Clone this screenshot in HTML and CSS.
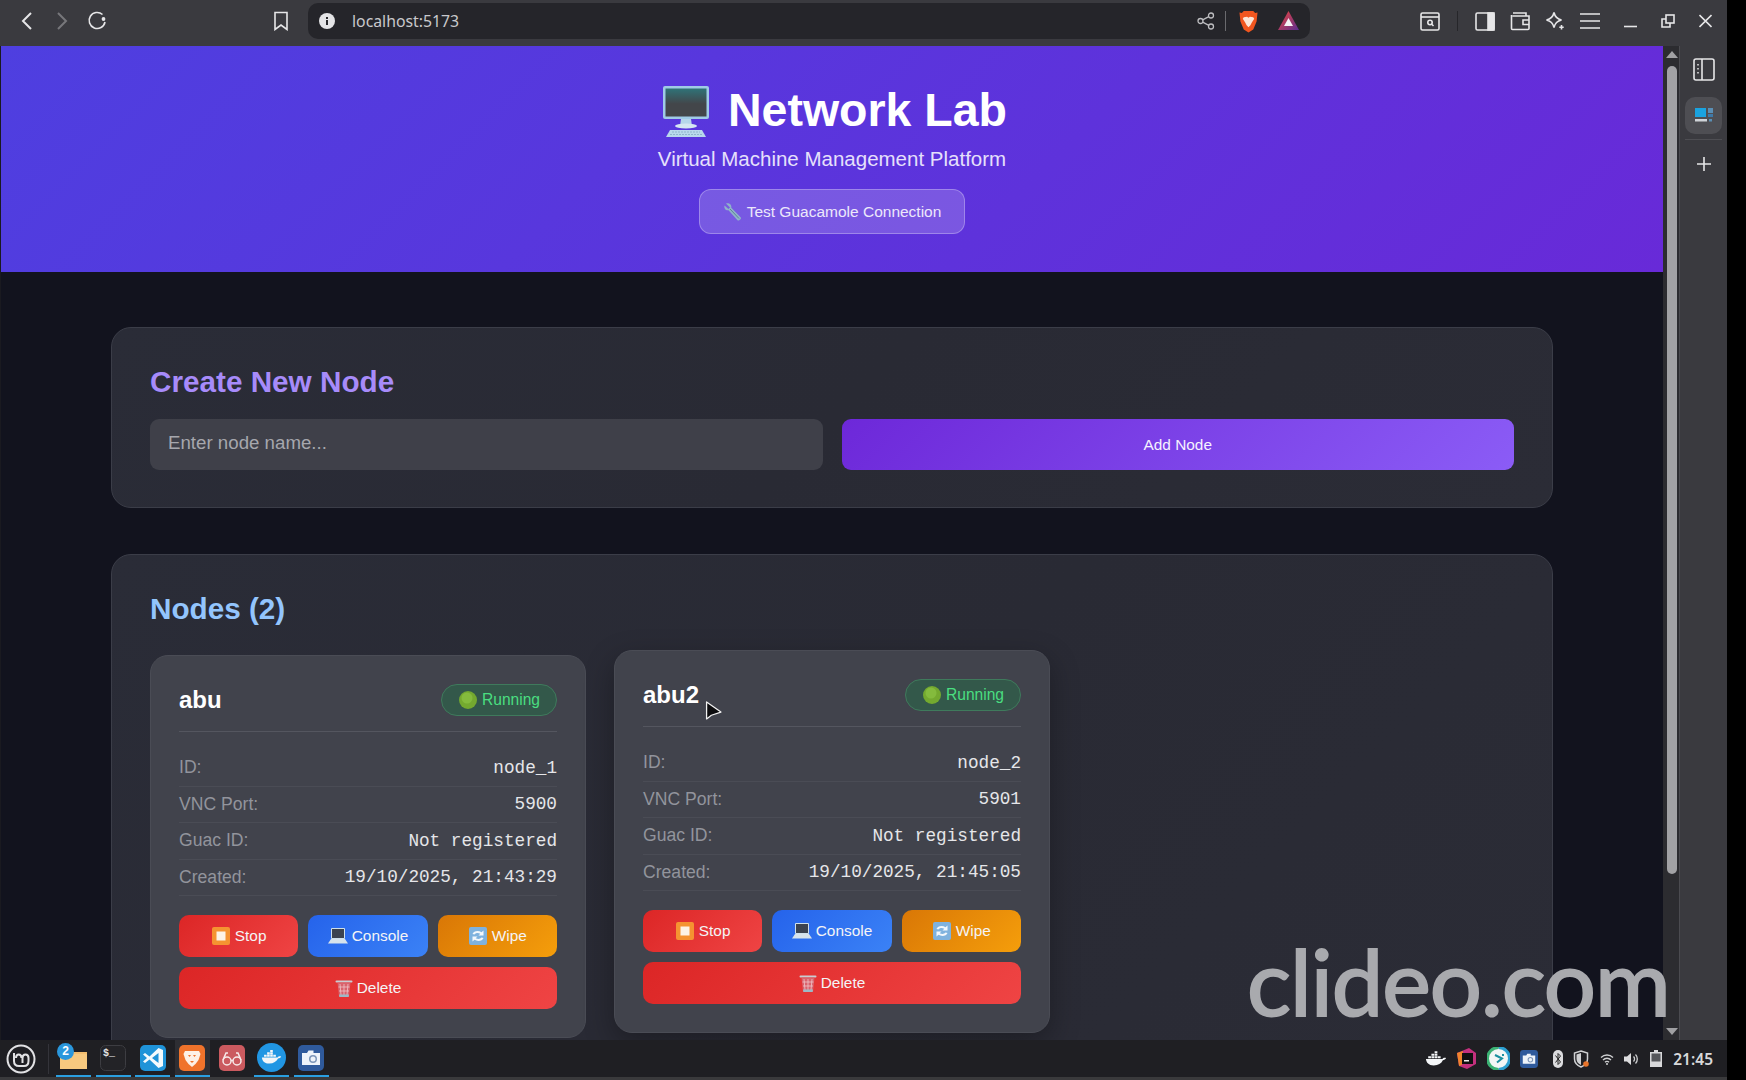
FILE: index.html
```html
<!DOCTYPE html>
<html lang="en">
<head>
    <meta charset="UTF-8">
    <meta name="viewport" content="width=device-width, initial-scale=1.0">
    <title>Network Lab</title>
    <link rel="stylesheet" href="styles.css">
</head>
<body>
    <!-- shared emoji-like icons -->
    <svg class="defs" width="0" height="0">
        <defs>
            <linearGradient id="monitorGlass" x1="0" y1="0" x2="0" y2="1">
                <stop offset="0" stop-color="#2f7378"/>
                <stop offset="0.55" stop-color="#43464a"/>
            </linearGradient>
            <linearGradient id="batGrad" x1="0" y1="0" x2="1" y2="1">
                <stop offset="0" stop-color="#f0463c"/>
                <stop offset="1" stop-color="#5b2d90"/>
            </linearGradient>
            <symbol id="i-monitor" viewBox="0 0 48 52">
                <rect x="1" y="1" width="46" height="33" rx="2" fill="#9fcbe6"/>
                <rect x="3.500" y="3.500" width="41" height="28" fill="url(#monitorGlass)"/>
                <path d="M19 34h10l1 7H18z" fill="#b5d6ea"/>
                <ellipse cx="24" cy="41" rx="11" ry="2.400" fill="#d4e6f2"/>
                <path d="M8 45h32l4 7H4z" fill="#b8d8ec"/>
                <path d="M10 47h28M8 49.500h32" stroke="#8fb4cc" stroke-width="1" stroke-dasharray="2 1"/>
            </symbol>
            <symbol id="i-wrench" viewBox="0 0 20 20">
                <path d="M3 1.500 7 5.500 5.500 7 1.500 3.500C.800 6 2.400 8.700 5.500 8.300L14.500 18.200C15.600 19.300 18.700 17 17.800 15.500L8.300 5.700C8.900 3 6.200.500 3 1.500Z" fill="#8fb3c9"/>
                <path d="M7 7 16 16.500" stroke="#5f8198" stroke-width="1"/>
            </symbol>
            <symbol id="i-dot" viewBox="0 0 20 20">
                <circle cx="10" cy="10" r="9" fill="#74a92f"/>
                <circle cx="9" cy="8" r="5.500" fill="#84bb3d"/>
            </symbol>
            <symbol id="i-stop" viewBox="0 0 20 20">
                <rect x="1" y="1" width="18" height="18" rx="2" fill="#f59331"/>
                <rect x="5.500" y="5.500" width="9" height="9" fill="#fdf3e6"/>
            </symbol>
            <symbol id="i-laptop" viewBox="0 0 20 18">
                <rect x="3" y="1" width="14" height="11" rx="1" fill="#cfe0ea"/>
                <rect x="4" y="2" width="12" height="9" fill="#3b4350"/>
                <path d="M3 12h14l3 4.500H0z" fill="#d6e3ec"/>
            </symbol>
            <symbol id="i-wipe" viewBox="0 0 20 20">
                <rect x="1" y="1" width="18" height="18" rx="2" fill="#7fb2de"/>
                <path d="M4.500 8C5.500 5.200 10 4 13.500 6.200L15.500 4.500V9.500H10.500L12.300 7.800C10 6.500 7.500 7 6.500 8.500Z" fill="#f3f7fb"/>
                <path d="M15.500 12C14.500 14.800 10 16 6.500 13.800L4.500 15.500V10.500H9.500L7.700 12.200C10 13.500 12.500 13 13.500 11.500Z" fill="#f3f7fb"/>
            </symbol>
            <symbol id="i-trash" viewBox="0 0 18 20">
                <path d="M1.500 3.500h15" stroke="#c8cdd2" stroke-width="2" stroke-linecap="round"/>
                <path d="M2.500 4.500h13l-1.500 14H4z" fill="#d9626c"/>
                <path d="M5 6l1 11M9 6v11M13 6l-1 11M3.500 9h11M4 13h10" stroke="#efc4c8" stroke-width=".8"/>
                <path d="M4 16.500h10l-.3 2.500H4.300z" fill="#9db9c6"/>
            </symbol>
            <symbol id="i-brave" viewBox="0 0 20 24">
                <path d="M5 1h10l2 2 2.500-.500L18.500 12 15 20.500 10 23.500 5 20.500 1.500 12 .500 2.500 3 3Z" fill="#f1561f"/>
                <path d="M5 7.500 8.500 7 10 8l1.500-1 3.500.500 1 1.500-2.500 4-1.500 3-2 2-2-2-1.500-3L4 9Z" fill="#fbe6d8"/>
            </symbol>
            <symbol id="i-docker" viewBox="0 0 24 16">
                <path d="M1 8.500h18c.800-1.500 2.500-1.800 4-1-.800 1.600-2 2.200-3.500 2.300C17.800 13.200 14.500 15.500 9.500 15.500 4 15.500 1.500 12.500 1 8.500Z" fill="#f4f6f8"/>
                <path d="M3.500 5.500h3v2.300h-3zM7 5.500h3v2.300H7zM10.500 5.500h3v2.300h-3zM14 5.500h3v2.300h-3zM7 2.700h3V5H7zM10.500 2.700h3V5h-3zM10.500 0h3v2.200h-3z" fill="#f4f6f8"/>
            </symbol>
            <symbol id="i-camera" viewBox="0 0 26 26">
                <rect width="26" height="26" rx="5" fill="#2f5a9c"/>
                <path d="M4 8h5l1.500-2.500h5V8h6.500v12H4z" fill="#eef3fa"/>
                <circle cx="15" cy="14" r="4" fill="#7c95b8"/>
                <circle cx="15" cy="14" r="2.500" fill="#eef3fa"/>
            </symbol>
        </defs>
    </svg>

    <div class="desktop">
        <header class="browser-bar">
            <div class="nav-group">
                <svg class="tool chevron" width="12" height="20" viewBox="0 0 12 20"><path d="M10 2 2 10l8 8"/></svg>
                <svg class="tool chevron dim" width="12" height="20" viewBox="0 0 12 20"><path d="M2 2l8 8-8 8"/></svg>
                <svg class="tool reload" width="20" height="20" viewBox="0 0 20 20"><path d="M15.500 3.500A8 8 0 1 0 18 11"/><circle cx="16.500" cy="8" r="1.900" fill="#e6e6e8" stroke="none"/></svg>
            </div>
            <svg class="tool bookmark" width="16" height="20" viewBox="0 0 16 20"><path d="M2 1.500h12v17l-6-4.500-6 4.500z"/></svg>
            <div class="url-pill">
                <svg class="info" width="16" height="16" viewBox="0 0 16 16"><circle cx="8" cy="8" r="8" fill="#e4e4e6"/><path d="M7 7h2v5H7zM7 4h2v2H7z" fill="#28282c"/></svg>
                <span class="url-text">localhost:5173</span>
                <svg class="tool share" width="18" height="18" viewBox="0 0 18 18"><circle cx="14" cy="3.500" r="2.500"/><circle cx="14" cy="14.500" r="2.500"/><circle cx="3.500" cy="9" r="2.500"/><path d="M5.700 7.800 11.800 4.700M5.700 10.200l6.100 3.100"/></svg>
                <span class="pill-divider"></span>
                <svg class="brave" width="19" height="23"><use href="#i-brave"/></svg>
                <svg class="bat" width="21" height="20" viewBox="0 0 21 20"><path d="M10.500 0 21 19H0z" fill="url(#batGrad)"/><path d="M10.500 7l4.500 8H6z" fill="#f5f2f5"/></svg>
            </div>
            <div class="tool-group">
                <svg class="tool" width="20" height="19" viewBox="0 0 20 19"><rect x="1" y="1" width="18" height="17" rx="1.500"/><path d="M1 5h18"/><circle cx="10" cy="10.500" r="2.200"/><path d="m11.800 12.300 1.700 1.700"/></svg>
                <span class="tool-divider"></span>
                <svg class="tool" width="20" height="19" viewBox="0 0 20 19"><rect x="1" y="1" width="18" height="17" rx="1.500"/><rect x="13" y="1" width="6" height="17" fill="#e6e6e8"/></svg>
                <svg class="tool" width="20" height="19" viewBox="0 0 20 19"><path d="M3 1h13v3H2.500M1.500 3v13.500a1 1 0 0 0 1 1H18a1 1 0 0 0 1-1V4H3"/><path d="M19 8h-6v4.500h6"/></svg>
                <svg class="tool" width="20" height="20" viewBox="0 0 20 20"><path d="M9 1.500c1 4.500 3 6.500 7.500 7.500-4.500 1-6.500 3-7.500 7.500-1-4.500-3-6.500-7.500-7.500C6 8 8 6 9 1.500Z"/><path d="M16.500 14v4.500M14.300 16.200h4.400"/></svg>
                <svg class="tool" width="20" height="18" viewBox="0 0 20 18"><path d="M0 2h20M0 9h20M0 16h20"/></svg>
            </div>
            <div class="window-group">
                <svg class="tool" width="13" height="14" viewBox="0 0 13 14"><path d="M0 12.500h13"/></svg>
                <svg class="tool" width="14" height="14" viewBox="0 0 14 14"><rect x="5" y="1" width="8" height="8"/><path d="M5 5H1v8h8V9"/></svg>
                <svg class="tool" width="13" height="14" viewBox="0 0 13 14"><path d="M.500 1 12.500 13M12.500 1 .500 13"/></svg>
            </div>
        </header>

        <div class="viewport">
            <div class="page">
                <section class="hero">
                    <h1 class="hero-title"><svg class="hero-emoji"><use href="#i-monitor"/></svg>Network Lab</h1>
                    <p class="hero-sub">Virtual Machine Management Platform</p>
                    <button class="test-btn"><svg class="emoji" width="20" height="20"><use href="#i-wrench"/></svg>Test Guacamole Connection</button>
                </section>

                <main class="content">
                    <section class="panel">
                        <h2 class="panel-title create-title">Create New Node</h2>
                        <div class="create-form">
                            <input class="node-input" type="text" placeholder="Enter node name...">
                            <button class="add-btn">Add Node</button>
                        </div>
                    </section>

                    <section class="panel">
                        <h2 class="panel-title nodes-title">Nodes (2)</h2>
                        <div class="node-grid">
                            <article class="node-card">
                                <div class="node-head">
                                    <h3 class="node-name">abu</h3>
                                    <span class="badge"><svg class="emoji" width="20" height="20"><use href="#i-dot"/></svg>Running</span>
                                </div>
                                <div class="node-info">
                                    <div class="info-row"><span class="info-label">ID:</span><span class="info-value">node_1</span></div>
                                    <div class="info-row"><span class="info-label">VNC Port:</span><span class="info-value">5900</span></div>
                                    <div class="info-row"><span class="info-label">Guac ID:</span><span class="info-value">Not registered</span></div>
                                    <div class="info-row"><span class="info-label">Created:</span><span class="info-value">19/10/2025, 21:43:29</span></div>
                                </div>
                                <div class="node-actions">
                                    <button class="act act-stop"><svg class="emoji" width="20" height="20"><use href="#i-stop"/></svg>Stop</button>
                                    <button class="act act-console"><svg class="emoji" width="20" height="18"><use href="#i-laptop"/></svg>Console</button>
                                    <button class="act act-wipe"><svg class="emoji" width="20" height="20"><use href="#i-wipe"/></svg>Wipe</button>
                                    <button class="act act-delete"><svg class="emoji" width="18" height="20"><use href="#i-trash"/></svg>Delete</button>
                                </div>
                            </article>

                            <article class="node-card is-hover">
                                <div class="node-head">
                                    <h3 class="node-name">abu2</h3>
                                    <span class="badge"><svg class="emoji" width="20" height="20"><use href="#i-dot"/></svg>Running</span>
                                </div>
                                <div class="node-info">
                                    <div class="info-row"><span class="info-label">ID:</span><span class="info-value">node_2</span></div>
                                    <div class="info-row"><span class="info-label">VNC Port:</span><span class="info-value">5901</span></div>
                                    <div class="info-row"><span class="info-label">Guac ID:</span><span class="info-value">Not registered</span></div>
                                    <div class="info-row"><span class="info-label">Created:</span><span class="info-value">19/10/2025, 21:45:05</span></div>
                                </div>
                                <div class="node-actions">
                                    <button class="act act-stop"><svg class="emoji" width="20" height="20"><use href="#i-stop"/></svg>Stop</button>
                                    <button class="act act-console"><svg class="emoji" width="20" height="18"><use href="#i-laptop"/></svg>Console</button>
                                    <button class="act act-wipe"><svg class="emoji" width="20" height="20"><use href="#i-wipe"/></svg>Wipe</button>
                                    <button class="act act-delete"><svg class="emoji" width="18" height="20"><use href="#i-trash"/></svg>Delete</button>
                                </div>
                                <svg class="cursor" width="17" height="22" viewBox="0 0 16 20"><path d="M1.500 1.500v16l4.500-3.500L15 11z" fill="#0c0c0e" stroke="#f2f2f2" stroke-width="1.200" stroke-linejoin="round"/></svg>
                            </article>
                        </div>
                    </section>
                </main>
            </div>

            <div class="scrollbar">
                <span class="arrow-up"></span>
                <span class="thumb"></span>
                <span class="arrow-down"></span>
            </div>

            <aside class="sidebar">
                <svg class="tool" width="22" height="23" viewBox="0 0 22 23"><rect x="1" y="1" width="20" height="21" rx="2"/><path d="M9 1v21"/><path d="M5 6v1.500M5 10v1.500M5 14v1.500" stroke-width="1.500"/></svg>
                <div class="side-tile">
                    <svg width="18" height="15" viewBox="0 0 18 15"><rect y="0" width="11" height="9" fill="#1aa3e0"/><rect x="13" y="0" width="5" height="5" fill="#5b8fb5"/><rect x="13" y="6" width="5" height="3" fill="#3f79a8"/><rect y="11" width="12" height="2.500" fill="#cfd3d8"/><rect x="14" y="11" width="3" height="2.500" fill="#5b8fb5"/></svg>
                </div>
                <span class="side-line"></span>
                <svg class="tool" width="14" height="14" viewBox="0 0 14 14"><path d="M7 0v14M0 7h14"/></svg>
            </aside>

            <div class="watermark">clideo.com</div>
        </div>

        <footer class="taskbar">
            <div class="task-left">
                <svg class="mint" width="30" height="30" viewBox="0 0 30 30"><circle cx="15" cy="15" r="13.500"/><path d="M8 9v8c0 3 2 5 5 5h5c3 0 4.500-2 4.500-5v-3c0-2-1-3.500-3-3.500s-3 1.500-3 3.500v5M15.500 14c0-2-1-3.500-2.800-3.500S10 12 10 14"/></svg>
                <span class="task-divider"></span>
                <div class="task-item on has-badge">
                    <svg width="27" height="22" viewBox="0 0 27 22"><path d="M0 2h11l2 3h14v17H0z" fill="#f2bd6e"/><path d="M0 7h27v15H0z" fill="#f7c97f"/></svg>
                    <span class="count">2</span>
                </div>
                <div class="task-item on">
                    <svg width="26" height="26" viewBox="0 0 26 26"><rect x=".5" y=".5" width="25" height="25" rx="5" fill="#232327" stroke="#3d3d42"/><text x="3" y="11" class="term-glyph">$_</text></svg>
                </div>
                <div class="task-item on">
                    <svg width="26" height="26" viewBox="0 0 26 26"><rect width="26" height="26" rx="5" fill="#1f93d8"/><path d="M18.500 3 9.500 11.500 5 8 3 9.500 7 13l-4 3.500L5 18l4.500-3.500 9 8.500 4.500-2V5zM18.500 8v10L12 13z" fill="#f4fafd"/></svg>
                </div>
                <div class="task-item on active">
                    <svg width="26" height="26" viewBox="0 0 26 26"><rect width="26" height="26" rx="5" fill="#f0732b"/><path d="M6 6h14l1.500 3-2 6-3 4-3.500 3-3.500-3-3-4-2-6z" fill="#fdf1e6"/><path d="M9 10h3l-1.500 2zM14 10h3l-1.500 2zM11 16h4l-2 2z" fill="#f0732b"/></svg>
                </div>
                <div class="task-item">
                    <svg width="26" height="26" viewBox="0 0 26 26"><rect width="26" height="26" rx="5" fill="#cb5a5f"/><circle cx="8" cy="16" r="4" fill="none" stroke="#f7e9e9" stroke-width="1.500"/><circle cx="18" cy="16" r="4" fill="none" stroke="#f7e9e9" stroke-width="1.500"/><path d="M12 15.500h2M4 15l3-7h2M22 15l-3-7h-2" fill="none" stroke="#f7e9e9" stroke-width="1.500"/></svg>
                </div>
                <div class="task-item on">
                    <svg width="29" height="29" viewBox="0 0 29 29"><circle cx="14.500" cy="14.500" r="14.500" fill="#2196e3"/><svg x="4" y="7" width="21" height="14"><use href="#i-docker"/></svg></svg>
                </div>
                <div class="task-item on">
                    <svg width="26" height="26"><use href="#i-camera"/></svg>
                </div>
            </div>
            <div class="task-tray">
                <svg width="22" height="15"><use href="#i-docker"/></svg>
                <svg width="19" height="21" viewBox="0 0 19 21"><path d="M0 5 12 0l7 5v11l-9 5-8-3z" fill="#c4307e"/><path d="M0 5l6-2-1 14-3 1z" fill="#f0842c"/><rect x="5" y="5" width="11" height="11" fill="#111"/><rect x="7" y="12" width="5" height="1.500" fill="#eee"/></svg>
                <svg width="23" height="23" viewBox="0 0 23 23"><circle cx="11.500" cy="11.500" r="11" fill="#f2f6f5"/><path d="M11.500 .500a11 11 0 0 1 0 22" fill="none" stroke="#2c9fd0" stroke-width="3"/><path d="M11.500 22.500a11 11 0 0 1 0-22" fill="none" stroke="#3bb273" stroke-width="3"/><path d="M8 8l7 3.500-5 4M16 7v2" fill="none" stroke="#1b8f9f" stroke-width="2"/></svg>
                <svg width="18" height="18"><use href="#i-camera"/></svg>
                <svg class="tray-gap" width="10" height="18" viewBox="0 0 10 18"><rect width="10" height="18" rx="5" fill="#dcdcde"/><path d="M2.500 5.500 7.500 12 5 14.500v-11L7.500 6 2.500 12.500" fill="none" stroke="#222" stroke-width="1"/></svg>
                <svg width="16" height="18" viewBox="0 0 16 18"><path d="M8 1 14.500 3v6c0 4-3 6.500-6.500 8C4.500 15.500 1.500 13 1.500 9V3Z" fill="none" stroke="#cfd0d2" stroke-width="1.500"/><path d="M8 3v12c-2.500-1.300-4.500-3-4.500-6V4.500z" fill="#cfd0d2"/><circle cx="13" cy="14" r="2.800" fill="#e8742b"/></svg>
                <svg width="14" height="12" viewBox="0 0 14 12"><path d="M1 4.500a8.500 8.500 0 0 1 12 0M3 7a5.500 5.500 0 0 1 8 0M5 9.300a2.800 2.800 0 0 1 4 0" fill="none" stroke="#cfd0d2" stroke-width="1.300"/><circle cx="7" cy="11" r="1" fill="#cfd0d2"/></svg>
                <svg width="15" height="14" viewBox="0 0 15 14"><path d="M0 4.500h3L7 1v12L3 9.500H0z" fill="#dcdcde"/><path d="M9.500 4.500a3.500 3.500 0 0 1 0 5M11.500 2.500a6.500 6.500 0 0 1 0 9" fill="none" stroke="#cfd0d2" stroke-width="1.300"/></svg>
                <svg width="12" height="17" viewBox="0 0 12 17"><path d="M4 0h4v2h4v15H0V2h4z" fill="#d8d8da"/><rect x="1.500" y="3.500" width="9" height="8" fill="#55565a"/></svg>
                <span class="clock">21:45</span>
            </div>
        </footer>
    </div>
</body>
</html>
```

FILE: styles.css
```css
* {
    box-sizing: border-box;
}
html, body {
    margin: 0;
    padding: 0;
    height: 100%;
    background-color: #000000;
    overflow: hidden;
}
body {
    font-family: "Liberation Sans", Arial, sans-serif;
}
button, input {
    font-family: inherit;
}
.defs {
    display: block;
    position: absolute;
}
.desktop {
    width: 1727px;
    height: 1080px;
    display: flex;
    flex-direction: column;
}

/* browser chrome */
.browser-bar {
    height: 46px;
    flex: none;
    padding-bottom: 4px;
    display: flex;
    align-items: center;
    background-color: #3a3a3f;
}
.tool {
    fill: none;
    stroke: #e6e6e8;
    stroke-width: 1.600;
    flex: none;
}
.chevron {
    stroke-width: 2;
}
.chevron.dim {
    stroke: #77777b;
}
.nav-group {
    display: flex;
    align-items: center;
    gap: 23px;
    margin-left: 21px;
}
.nav-group .reload {
    margin-left: -4px;
}
.bookmark {
    margin-left: 166px;
}
.url-pill {
    width: 1002px;
    height: 36px;
    margin-left: 19px;
    padding: 0 11px;
    display: flex;
    align-items: center;
    background-color: #25252a;
    border-radius: 10px;
}
.url-text {
    margin-left: 17px;
    flex: 1;
    font-family: "Noto Sans", sans-serif;
    font-size: 15.800px;
    color: #c9c9cc;
}
.share {
    stroke: #bdbdc0;
    stroke-width: 1.300;
}
.pill-divider {
    width: 1px;
    height: 20px;
    margin: 0 13px 0 10px;
    background-color: #6a6a6e;
}
.brave {
    margin-right: 20px;
}
.tool-group {
    display: flex;
    align-items: center;
    gap: 15px;
    margin-left: 110px;
}
.tool-divider {
    width: 1px;
    height: 20px;
    margin: 0 2px;
    background-color: #26262a;
}
.window-group {
    display: flex;
    align-items: center;
    gap: 24px;
    margin-left: 24px;
}

.viewport {
    flex: 1;
    min-height: 0;
    display: flex;
    position: relative;
}
.page {
    width: 1663px;
    flex: none;
    overflow: hidden;
    background-color: #12131e;
    border-left: 1px solid #1a1a20;
}

/* hero */
.hero {
    height: 226px;
    padding-top: 38px;
    display: flex;
    flex-direction: column;
    align-items: center;
    background: linear-gradient(135deg, #4e3fe0 0%, #682ad8 100%);
    color: #ffffff;
}
.hero-title {
    margin: 0;
    display: flex;
    align-items: center;
    font-size: 46.500px;
    font-weight: 700;
    line-height: 53px;
}
.hero-emoji {
    width: 48px;
    height: 52px;
    margin: 0 18px 0 5px;
}
.hero-sub {
    margin: 10px 0 0;
    font-size: 20.500px;
    line-height: 23px;
    color: #e6e0fb;
}
.test-btn {
    width: 266px;
    height: 45px;
    margin-top: 19px;
    display: flex;
    align-items: center;
    justify-content: center;
    background-color: rgba(255, 255, 255, 0.18);
    border: 1px solid rgba(255, 255, 255, 0.28);
    border-radius: 12px;
    color: #ece8fb;
    font-size: 15.500px;
}
.test-btn .emoji {
    margin-right: 4px;
}

/* panels */
.content {
    padding: 55px 110px 0;
    display: flex;
    flex-direction: column;
    gap: 46px;
}
.panel {
    padding: 37px 38px;
    background: linear-gradient(135deg, #2a2c37 0%, #292a34 50%, #2b2c36 100%);
    border: 1px solid #3b3d48;
    border-radius: 20px;
}
.panel-title {
    margin: 0;
    font-size: 29.700px;
    font-weight: 700;
    line-height: 34px;
}
.create-title {
    color: #a78bfa;
    margin-bottom: 20px;
}
.nodes-title {
    color: #93c5fd;
    margin-bottom: 29px;
}
.create-form {
    display: grid;
    grid-template-columns: 1fr 1fr;
    gap: 19px;
}
.node-input {
    height: 51px;
    padding: 0 18px 3px;
    background-color: #3f4049;
    border: none;
    border-radius: 9px;
    font-size: 18.700px;
    color: #ffffff;
}
.node-input::placeholder {
    color: #a6a7ad;
    opacity: 1;
}
.add-btn {
    height: 51px;
    background: linear-gradient(135deg, #6d28d9 0%, #8b5cf6 100%);
    border: none;
    border-radius: 9px;
    color: #f6f2ff;
    font-size: 15.400px;
}

/* node cards */
.node-grid {
    display: grid;
    grid-template-columns: repeat(3, 1fr);
    gap: 28px;
}
.node-card {
    position: relative;
    padding: 28px;
    background-color: #41434c;
    border: 1px solid #4a4c55;
    border-radius: 18px;
}
.node-card.is-hover {
    transform: translateY(-5px);
    box-shadow: 0 10px 30px rgba(0, 0, 0, 0.3);
}
.node-head {
    display: flex;
    align-items: center;
    justify-content: space-between;
    padding-bottom: 15px;
    border-bottom: 1px solid #54565f;
    margin-bottom: 18px;
}
.node-name {
    margin: 0;
    font-size: 24px;
    font-weight: 700;
    color: #ffffff;
}
.badge {
    width: 116px;
    height: 32px;
    display: flex;
    align-items: center;
    justify-content: center;
    gap: 4px;
    background-color: #33584a;
    border: 1px solid #3f7a5c;
    border-radius: 16px;
    color: #4ade80;
    font-size: 15.600px;
}
.info-row {
    height: 36.500px;
    display: flex;
    align-items: center;
    justify-content: space-between;
    border-bottom: 1px solid #4a4c55;
}
.info-label {
    font-size: 17.600px;
    color: #92949c;
}
.info-value {
    font-family: "Liberation Mono", "Courier New", monospace;
    font-size: 17.700px;
    color: #e5e6e9;
}
.node-actions {
    margin-top: 19px;
    display: grid;
    grid-template-columns: repeat(3, 1fr);
    gap: 10px;
}
.act {
    height: 42px;
    display: flex;
    align-items: center;
    justify-content: center;
    gap: 4px;
    border: none;
    border-radius: 10px;
    color: #f4f4f6;
    font-size: 15.400px;
}
.act-stop, .act-delete {
    background: linear-gradient(135deg, #dc2626 0%, #ef4444 100%);
}
.act-console {
    background: linear-gradient(135deg, #2563eb 0%, #3b82f6 100%);
}
.act-wipe {
    background: linear-gradient(135deg, #d97706 0%, #f59e0b 100%);
}
.act-delete {
    grid-column: 1 / -1;
}
.cursor {
    position: absolute;
    left: 90px;
    top: 49px;
}

/* scrollbar and side panel */
.scrollbar {
    width: 16px;
    flex: none;
    position: relative;
    background-color: #2c2c30;
}
.arrow-up, .arrow-down {
    position: absolute;
    left: 3px;
    width: 0;
    height: 0;
    border-left: 6px solid transparent;
    border-right: 6px solid transparent;
}
.arrow-up {
    top: 5px;
    border-bottom: 7px solid #a0a0a3;
}
.arrow-down {
    bottom: 5px;
    border-top: 7px solid #a0a0a3;
}
.thumb {
    position: absolute;
    left: 4px;
    top: 20px;
    width: 10px;
    height: 808px;
    border-radius: 5px;
    background-color: #a2a2a5;
}
.sidebar {
    flex: 1;
    display: flex;
    flex-direction: column;
    align-items: center;
    padding-top: 12px;
    background-color: #3a3a3f;
    border-left: 1px solid #4b4b50;
}
.side-tile {
    width: 37px;
    height: 37px;
    margin-top: 16px;
    display: flex;
    align-items: center;
    justify-content: center;
    background-color: #4e4e53;
    border-radius: 10px;
}
.side-line {
    width: 37px;
    height: 1px;
    margin: 5px 0 17px;
    background-color: #4e4e53;
}
.watermark {
    position: absolute;
    left: 1247px;
    top: 880px;
    font-family: "Lato", sans-serif;
    font-size: 92px;
    letter-spacing: -1px;
    line-height: 110px;
    color: #a9aaae;
    -webkit-text-stroke: 2px #a9aaae;
}

/* desktop panel */
.taskbar {
    height: 40px;
    flex: none;
    display: flex;
    align-items: flex-start;
    justify-content: space-between;
    background-color: #1f1f23;
    border-bottom: 3px solid #3a3a3c;
}
.task-left {
    display: flex;
    align-items: center;
    height: 37px;
}
.mint {
    margin-left: 6px;
    fill: none;
    stroke: #e2e2e4;
    stroke-width: 2;
}
.task-divider {
    width: 1px;
    height: 30px;
    margin: 0 7px 0 12px;
    background-color: #34343a;
}
.task-item {
    position: relative;
    width: 35px;
    height: 37px;
    margin-right: 4.600px;
    display: flex;
    align-items: center;
    justify-content: center;
    border-bottom: 2px solid transparent;
}
.task-item.on {
    border-bottom-color: #2a9fe0;
}
.task-item.active {
    background-color: #2e2e33;
}
.count {
    position: absolute;
    left: 1px;
    top: 3px;
    width: 17px;
    height: 17px;
    border-radius: 50%;
    background-color: #2a97dc;
    color: #ffffff;
    font-size: 12px;
    font-weight: 700;
    line-height: 17px;
    text-align: center;
}
.term-glyph {
    font-family: "Liberation Mono", monospace;
    font-size: 10px;
    font-weight: 700;
    fill: #e6e6e6;
}
.task-tray {
    height: 37px;
    display: flex;
    align-items: center;
    gap: 10.500px;
    padding-right: 14px;
}
.tray-gap {
    margin-left: 4px;
}
.clock {
    margin-left: 1px;
    font-family: "Noto Sans", sans-serif;
    font-size: 15.500px;
    font-weight: 600;
    color: #d8d9db;
}
```
